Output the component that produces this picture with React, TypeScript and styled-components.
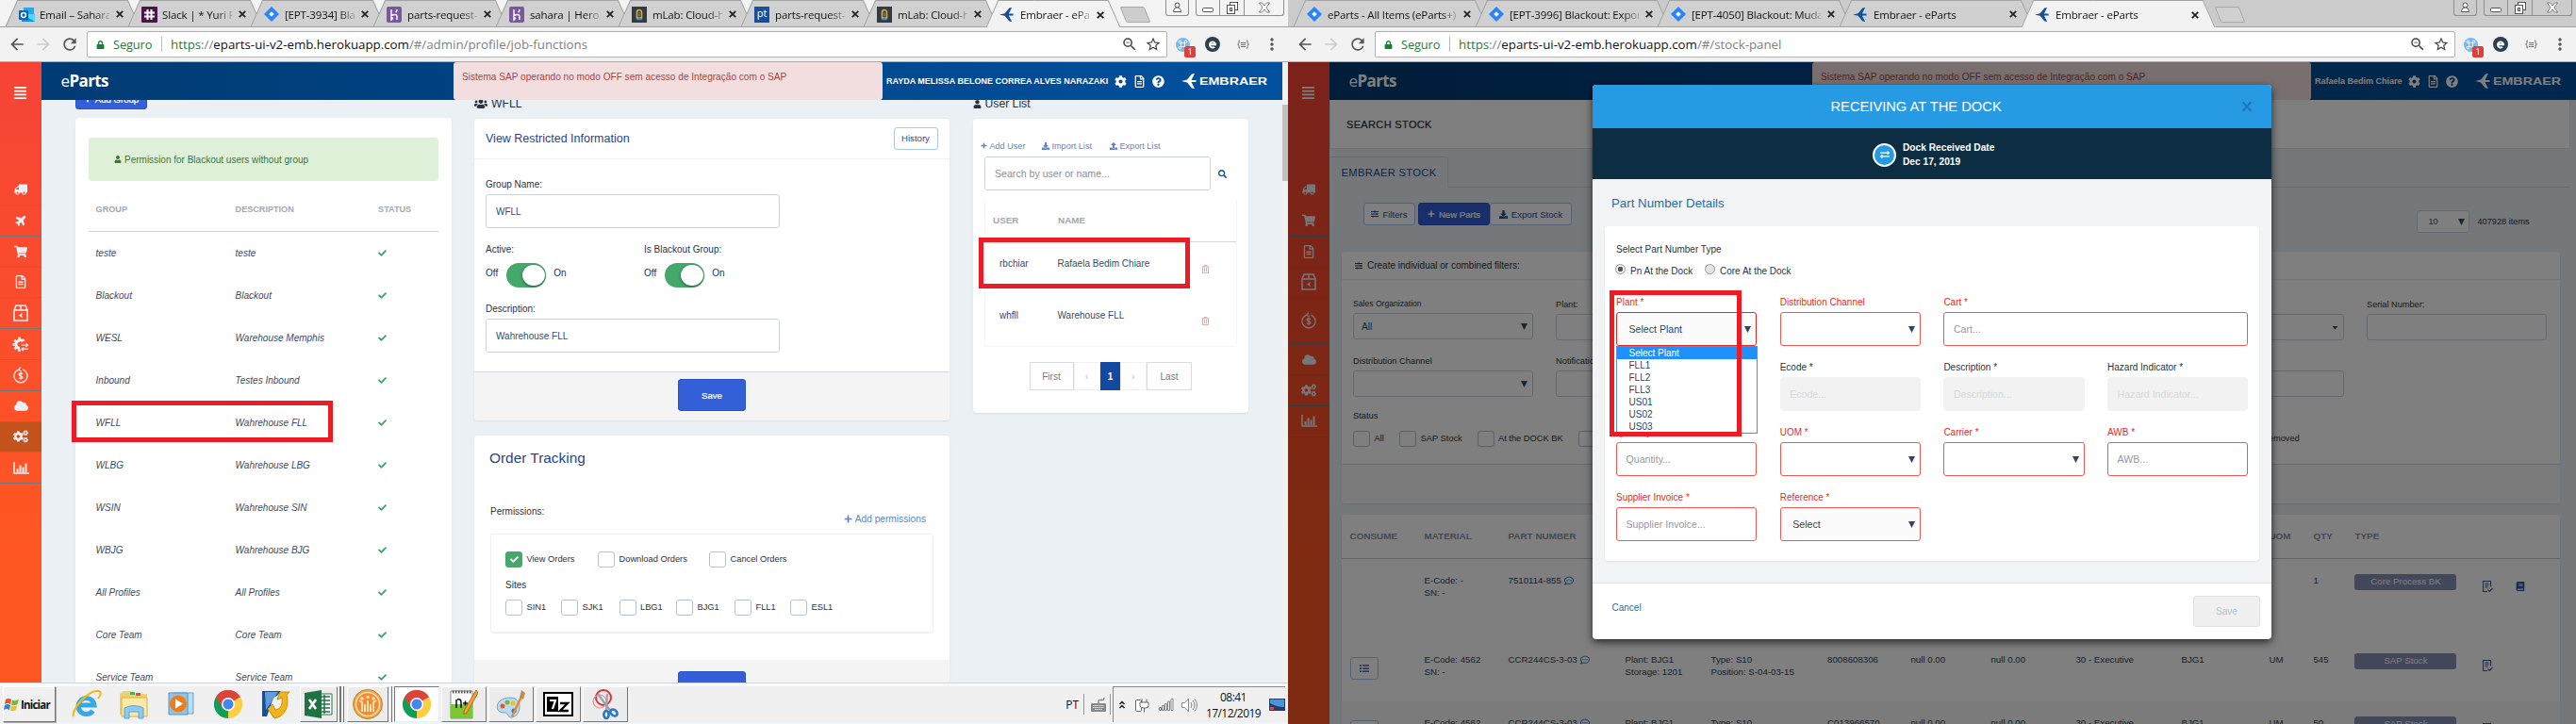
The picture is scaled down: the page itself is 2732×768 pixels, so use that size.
import React from 'react';
import styled, { createGlobalStyle, css } from 'styled-components';
import {
  FaTruck, FaPlane, FaShoppingCart, FaRegFileAlt, FaCloud, FaCogs, FaCog, FaUsers, FaUser, FaRegTrashAlt,
  FaSlidersH, FaPlus, FaDownload, FaUpload, FaSearch, FaQuestionCircle, FaCheck, FaExchangeAlt, FaListUl,
  FaRegCommentDots, FaBook, FaAlignJustify, FaLock,
} from 'react-icons/fa';
import { MdArrowBack, MdArrowForward, MdRefresh, MdStarBorder, MdMoreVert, MdZoomOut } from 'react-icons/md';

const Global = createGlobalStyle`
  * { box-sizing: border-box; }
  body { margin: 0; font-family: "Liberation Sans", Arial, sans-serif; font-size: 10px; color: #2a3342; }
  svg { display: block; flex: none; }
`;

const Desktop = styled.div`
  display: flex;
  width: 2732px;
  height: 768px;
  overflow: hidden;
`;
const Window = styled.section`
  display: flex;
  flex-direction: column;
  width: 1366px;
  height: 768px;
  position: relative;
  overflow: hidden;
  background: #fff;
`;

/* ---------- browser chrome ---------- */
const uiFont = css`font-family: "Open Sans", "Noto Sans", sans-serif;`;

const TabStrip = styled.div<{ $bg: string }>`
  display: flex;
  height: 29px;
  flex: none;
  padding-left: 12px;
  background: ${p => p.$bg};
  border-bottom: 1px solid #a3a3a3;
  ${uiFont}
`;
const TabBox = styled.div<{ $w: number; $active?: boolean }>`
  position: relative;
  display: flex;
  align-items: center;
  width: ${p => p.$w}px;
  height: ${p => (p.$active ? 29 : 28)}px;
  flex: none;
  padding: 2px 0 0 8px;
  z-index: ${p => (p.$active ? 2 : 1)};
  &::before, &::after {
    content: "";
    position: absolute;
    top: 0;
    bottom: 0;
    z-index: -1;
    background: ${p => (p.$active ? '#f2f2f2' : '#d0d0d0')};
    border-top: 1px solid #a3a3a3;
  }
  &::before { left: 0; width: 60%; transform: skewX(-24deg); border-left: 1.5px solid #a0a0a0; }
  &::after { right: 0; width: 60%; transform: skewX(24deg); border-right: 1.5px solid #a0a0a0; }
`;
const TabIcon = styled.span`width: 16px; height: 17px; display: flex; align-items: center;`;
const TabTitle = styled.span<{ $w: number }>`
  width: ${p => p.$w}px;
  margin-left: 6px;
  overflow: hidden;
  white-space: nowrap;
  font-size: 11.5px;
  letter-spacing: -0.15px;
  color: #111;
  mask-image: linear-gradient(90deg, #000 calc(100% - 16px), transparent calc(100% + 4px));
`;
const TabClose = styled.span`
  margin-left: 7px;
  svg { width: 8px; height: 8px; }
`;
const NewTab = styled.span<{ $bg: string }>`
  width: 26px;
  height: 17px;
  margin: 7px 0 0 9px;
  transform: skewX(22deg);
  background: ${p => p.$bg};
  border: 1px solid #a8a8a8;
  border-radius: 2px;
`;
const WinControls = styled.div`
  display: flex;
  gap: 7px;
  margin-left: auto;
  padding-right: 4px;
  height: 17px;
`;
const CtlGroup = styled.div`
  display: flex;
  border: 1px solid #8e8e8e;
  border-top: 0;
  border-radius: 0 0 3px 3px;
`;
const Ctl = styled.span<{ $w: number }>`
  width: ${p => p.$w}px;
  display: flex;
  align-items: center;
  justify-content: center;
  & + & { border-left: 1px solid #8e8e8e; }
`;
const Toolbar = styled.div`
  display: flex;
  align-items: center;
  height: 37px;
  flex: none;
  padding: 0 0 0 8px;
  background: #f2f2f2;
  border-bottom: 1px solid #aaa;
  color: #555;
  ${uiFont}
`;
const NavIcon = styled.span<{ $light?: boolean }>`
  width: 28px;
  color: ${p => (p.$light ? '#ccc' : '#555')};
  svg { width: 20px; height: 20px; }
`;
const AddressBar = styled.div`
  display: flex;
  align-items: center;
  width: 1146px;
  height: 28px;
  padding: 0 5px 0 9px;
  background: #fff;
  border: 1px solid #b0b0b0;
  border-radius: 2px;
  font-size: 13.3px;
`;
const Secure = styled.span`
  display: flex;
  align-items: center;
  width: 70px;
  margin-right: 9px;
  gap: 9px;
  color: #188038;
  border-right: 1px solid #bbb;
  font-size: 12.8px;
  letter-spacing: -0.1px;
  line-height: 16px;
`;
const Url = styled.span`
  flex: 1;
  color: #808080;
  i { font-style: normal; color: #188038; }
  b { font-weight: 400; color: #111; }
`;
const BarIcon = styled.span`margin-left: 7px; color: #444; svg { width: 18px; height: 18px; }`;
const Extension = styled.span<{ $ml: number }>`position: relative; margin-left: ${p => p.$ml}px;`;
const Badge = styled.span`
  position: absolute;
  left: 9px;
  top: 9px;
  width: 12px;
  height: 12px;
  border-radius: 2px;
  background: #db4040;
  color: #fff;
  font-size: 9px;
  line-height: 12px;
  text-align: center;
`;

const Bird = ({ c, s = 16 }: { c: string; s?: number }) => (
  <svg width={s} height={s} viewBox="0 0 16 16" fill={c}>
    <path d="M0 8 L6 6.6 L11 .5 L14 0 L10.500 7 H15.500 V9 H10.500 L14 16 L11 15.500 L6 9.400Z" />
  </svg>
);
const icons: Record<string, React.ReactNode> = {
  outlook: (
    <svg width="17" height="17" viewBox="0 0 17 17"><rect x="5" y="1" width="11" height="14" fill="#28a8ea" /><path d="M3 8h14v8H3z" fill="#50d9ff" /><path d="M3 8l14 8H3z" fill="#1490df" /><rect y="4" width="10" height="10" rx="1" fill="#0364b8" /><circle cx="5" cy="9" r="2.400" fill="none" stroke="#fff" strokeWidth="1.500" /></svg>
  ),
  slack: (
    <svg width="17" height="17" viewBox="0 0 17 17"><rect width="17" height="17" rx="1" fill="#4a154b" /><path d="M6.500 3v11M10.500 3v11M3 6.500h11M3 10.500h11" stroke="#fff" strokeWidth="2" /></svg>
  ),
  jira: (
    <svg width="16" height="16" viewBox="0 0 16 16"><path d="M8 0l8 8-8 8-8-8z" fill="#2684ff" /><path d="M8 5.200L10.800 8 8 10.800 5.200 8z" fill="#fff" /></svg>
  ),
  heroku: (
    <svg width="16" height="17" viewBox="0 0 16 17"><rect width="16" height="17" rx="2" fill="#79589f" /><path d="M5 3v6.500c3-1.500 6-1.500 6 .5v4M5 14v-3l1.500 1.500zM11 3c0 1.500-.6 2.500-1.300 3.200" fill="none" stroke="#fff" strokeWidth="1.400" /></svg>
  ),
  mlab: (
    <svg width="16" height="17" viewBox="0 0 16 17"><rect width="16" height="17" fill="#2f3b45" /><path d="M5.500 12V6a2.500 2.500 0 0 1 5 0v6z" fill="none" stroke="#f0a828" strokeWidth="1.600" /><path d="M5 13.500h6M8 6v6" stroke="#3f8ad0" strokeWidth="1.300" /></svg>
  ),
  bird: <Bird c="#1450a0" s={15} />,
};
const PtIcon = styled.span`
  width: 16px;
  height: 17px;
  background: #14509b;
  color: #fff;
  font-size: 11px;
  line-height: 14px;
  text-align: center;
`;

type TabInfo = { icon: string; title: string };
const Tab = ({ icon, title, w, active }: TabInfo & { w: number; active?: boolean }) => (
  <TabBox $w={w} $active={active}>
    <TabIcon>{icon === 'pt' ? <PtIcon>pt</PtIcon> : icons[icon]}</TabIcon>
    <TabTitle $w={w - 56}>{title}</TabTitle>
    <TabClose>
      <svg viewBox="0 0 8 8" stroke="#222" strokeWidth="1.800"><path d="M.8.8l6.400 6.400M7.200.8L.8 7.200" /></svg>
    </TabClose>
  </TabBox>
);

const Chrome = ({ tabs, w, bg, newBg, path }: { tabs: TabInfo[]; w: number; bg: string; newBg: string; path: string }) => (
  <>
    <TabStrip $bg={bg}>
      {tabs.map((t, i) => <Tab key={i} {...t} w={w} active={i === tabs.length - 1} />)}
      <NewTab $bg={newBg} />
      <WinControls>
        <CtlGroup><Ctl $w={23}><svg width="11" height="12" viewBox="0 0 11 12" fill="#fff" stroke="#555"><circle cx="5.500" cy="3.500" r="2.500" /><path d="M1.500 10.500c0-6 8-6 8 0z" /></svg></Ctl></CtlGroup>
        <CtlGroup>
          <Ctl $w={24}><svg width="13" height="12" fill="#fff" stroke="#555"><rect x=".5" y="6.500" width="11" height="4" rx="1" /></svg></Ctl>
          <Ctl $w={26}><svg width="14" height="13" fill="#fff" stroke="#555"><rect x="4.500" y=".5" width="8" height="8" /><rect x="1.500" y="3.500" width="8" height="9" /><rect x="4.500" y="6.500" width="2" height="3" /></svg></Ctl>
          <Ctl $w={42}><svg width="12" height="12" viewBox="0 0 12 12" fill="#fff" stroke="#666" strokeWidth=".8"><path d="M.5 1h3L6 4l2.500-3h3L8 6l3.500 5h-3L6 8l-2.500 3h-3L4 6z" /></svg></Ctl>
        </CtlGroup>
      </WinControls>
    </TabStrip>
    <Toolbar>
      <NavIcon><MdArrowBack /></NavIcon>
      <NavIcon $light><MdArrowForward /></NavIcon>
      <NavIcon><MdRefresh /></NavIcon>
      <AddressBar>
        <Secure><FaLock size={9} />Seguro</Secure>
        <Url><i>https</i>://<b>eparts-ui-v2-emb.herokuapp.com</b>{path}</Url>
        <BarIcon><MdZoomOut /></BarIcon>
        <BarIcon><MdStarBorder /></BarIcon>
      </AddressBar>
      <Extension $ml={9}>
        <svg width="15" height="15" viewBox="0 0 15 15"><circle cx="7.500" cy="7.500" r="7.500" fill="#7ab8ee" /><path d="M5.500 5.500h4v4h-4zM5.500 5.500h-1a1.200 1.200 0 1 1 1-1zM9.500 5.500h1a1.200 1.200 0 1 0-1-1zM5.500 9.500h-1a1.200 1.200 0 1 0 1 1zM9.500 9.500h1a1.200 1.200 0 1 1-1 1z" fill="none" stroke="#fff" /></svg>
        <Badge>1</Badge>
      </Extension>
      <Extension $ml={16}>
        <svg width="16" height="16" viewBox="0 0 16 16"><circle cx="8" cy="8" r="8" fill="#2c3f50" /><path d="M5 8.200h6a3 3 0 1 0-1 2.500" fill="none" stroke="#fff" strokeWidth="2" /></svg>
      </Extension>
      <Extension $ml={17}>
        <svg width="15" height="10" fill="none" stroke="#777"><path d="M4 1H3v3L1.500 5 3 6v3h1M11 1h1v3l1.500 1L12 6v3h-1M5 3.500h5M5 5.500h5M5 7.500h5" /></svg>
      </Extension>
      <Extension $ml={13}><MdMoreVert size={20} /></Extension>
    </Toolbar>
  </>
);

/* ---------- application shell ---------- */
const Body = styled.div<{ $h: number }>`
  display: flex;
  height: ${p => p.$h}px;
  flex: none;
  position: relative;
`;
const Sidebar = styled.nav`
  width: 44px;
  flex: none;
  background: linear-gradient(180deg, #f64336, #ff5722 80%);
  color: #eceff5;
`;
const MenuButton = styled.div`
  display: flex;
  align-items: center;
  height: 119.2px;
  padding: 0 0 54px 14px;
  color: #fff;
`;
const SideItem = styled.div<{ $h?: number; $on?: boolean }>`
  display: flex;
  align-items: center;
  justify-content: center;
  height: ${p => p.$h || 32.8}px;
  border-bottom: 1.5px solid #75787a;
  background: ${p => (p.$on ? '#c4521d' : 'none')};
`;
const Flip = styled.span<{ $t: string }>`transform: ${p => p.$t};`;

const sideIcons: Record<string, React.ReactNode> = {
  truck: <Flip $t="scaleX(-1)"><FaTruck size={14} /></Flip>,
  plane: <Flip $t="rotate(-45deg)"><FaPlane size={13} /></Flip>,
  cart: <FaShoppingCart size={14} />,
  file: <FaRegFileAlt size={14} />,
  box: <svg width="16" height="18" viewBox="0 0 16 18" fill="none" stroke="currentColor" strokeWidth="1.500"><path d="M1 6h14v11H1zM1 6l2-5h10l2 5M8 1v5" /><path d="M6 11.500l4-3-1 3 1 3z" fill="currentColor" stroke="none" /></svg>,
  gear: (
    <svg width="18" height="17" viewBox="0 0 18 17" fill="none" stroke="currentColor">
      <path d="M11.500 5A4.500 4.500 0 1 0 8 12.800" strokeWidth="3" />
      <path d="M2.200 3.800l1.500 1.400M7.500 .6v2.400M12.600 3.200l-1.400 1.400M.5 8.300h2.200M2.400 13.200l1.500-1.500M7.300 16v-2.500" strokeWidth="2.800" />
      <path d="M9.500 9h7M14.500 7.200L16.500 9l-2 1.800M17 13.200h-7M12 11.400l-2 1.800 2 1.800" strokeWidth="1.200" />
    </svg>
  ),
  dollar: <svg width="16" height="18" viewBox="0 0 16 18" fill="none" stroke="currentColor" strokeWidth="1.300"><path d="M10.500 3.200a7 7 0 1 1-5.500.2M8 .5L5.500 3.300 9 5" /><path d="M10 7.500C9 6.500 6 6.500 6 8.200s4 1.400 4 3-3 1.800-4 .6M8 5.800v8" /></svg>,
  cloud: <FaCloud size={15} />,
  cogs: <FaCogs size={16} />,
  chart: <svg width="17" height="13" viewBox="0 0 17 13" fill="none" stroke="currentColor"><path d="M1 0v12h16" strokeWidth="1.500" /><path d="M4.500 11V7M7.500 11V3.500M10.500 11V5.500M13.500 11V1.500" strokeWidth="2" /></svg>,
};

const Main = styled.main`
  display: flex;
  flex-direction: column;
  flex: 1;
  min-width: 0;
  background: #eaf0f4;
`;
const Header = styled.header`
  display: flex;
  height: 40px;
  flex: none;
  background: linear-gradient(90deg, #003b73, #00519f);
  color: #fff;
`;
const Brand = styled.div<{ $w: number }>`
  width: ${p => p.$w}px;
  padding-left: 20.5px;
  font: 17px/39px "Open Sans", sans-serif;
  letter-spacing: -0.6px;
  b { font-weight: 700; }
`;
const Banner = styled.div<{ $w: number }>`
  width: ${p => p.$w}px;
  padding: 9px 9px;
  background: #f2dede;
  color: #a94442;
  border-radius: 3px;
  line-height: 14px;
  font-size: 10.1px;
`;
const UserName = styled.div<{ $w: number }>`
  width: ${p => p.$w}px;
  margin-left: 4px;
  font-size: 9px;
  font-weight: 700;
  line-height: 40px;
  white-space: nowrap;
`;
const HeaderIcons = styled.div`
  display: flex;
  align-items: center;
  gap: 7px;
  margin-right: 18px;
`;
const Logo = styled.div`display: flex; align-items: center; gap: 2px;`;

const AppHeader = ({ brandW, bannerW, name, nameW }: { brandW: number; bannerW: number; name: string; nameW: number }) => (
  <Header>
    <Brand $w={brandW}>e<b>Parts</b></Brand>
    <Banner $w={bannerW}>Sistema SAP operando no modo OFF sem acesso de Integração com o SAP</Banner>
    <UserName $w={nameW}>{name}</UserName>
    <HeaderIcons><FaCog size={13} /><FaRegFileAlt size={13} /><FaQuestionCircle size={13} /></HeaderIcons>
    <Logo>
      <Bird c="#fff" />
      <svg width="74" height="12"><text x="1" y="10" fontSize="10.500" fontWeight="700" fill="#fff" textLength="72" lengthAdjust="spacingAndGlyphs">EMBRAER</text></svg>
    </Logo>
  </Header>
);

/* ---------- shared parts ---------- */
const Highlight = styled.div<{ $x: number; $y: number; $w: number; $h: number }>`
  position: absolute;
  left: ${p => p.$x}px;
  top: ${p => p.$y}px;
  width: ${p => p.$w}px;
  height: ${p => p.$h}px;
  border: 5px solid #ed1c24;
  z-index: 20;
`;
const Card = styled.div<{ $mt?: number }>`
  margin-top: ${p => p.$mt || 0}px;
  background: #fff;
  border-radius: 4px;
  box-shadow: 0 1px 2px rgba(0, 0, 0, 0.08);
  overflow: hidden;
`;
const Label = styled.div<{ $mt?: number; $c?: string; $s?: number }>`
  margin-top: ${p => p.$mt || 0}px;
  height: 14px;
  line-height: 14px;
  font-size: ${p => p.$s || 10}px;
  color: ${p => p.$c || '#2a3342'};
  white-space: nowrap;
`;
const Input = styled.div<{ $w?: number; $mt?: number; $h?: number; $ph?: boolean }>`
  width: ${p => (p.$w ? p.$w + 'px' : 'auto')};
  height: ${p => p.$h || 36}px;
  margin-top: ${p => p.$mt || 0}px;
  display: flex;
  align-items: center;
  justify-content: space-between;
  padding: 0 10px;
  border: 1px solid #ccd3dd;
  border-radius: 3px;
  background: #fff;
  color: ${p => (p.$ph ? '#8b8f94' : '#3a4a66')};
`;
const SelectInput = styled(Input)`padding: 0 5px 0 8px;`;
const Button = styled.div<{ $kind: 'primary' | 'outline'; $w: number; $h: number }>`
  width: ${p => p.$w}px;
  height: ${p => p.$h}px;
  flex: none;
  display: flex;
  align-items: center;
  justify-content: center;
  gap: 4px;
  border-radius: 3px;
  font-size: 9.6px;
  white-space: nowrap;
  ${p => p.$kind === 'primary'
    ? css`background: #335fd8; border: 1px solid #2a52c0; color: #fff; -webkit-text-stroke: 0.2px #fff;`
    : css`background: #fff; border: 1px solid #a9c5f2; color: #1f4a99;`}
`;
const AddGroupButton = styled(Button)`padding-top: 2px;`;
const NewPartsButton = styled(Button)`margin-left: 3px;`;
const Checkbox = styled.span<{ $on?: boolean }>`
  width: 18px;
  height: 17px;
  flex: none;
  display: flex;
  align-items: center;
  justify-content: center;
  border: 1px solid ${p => (p.$on ? '#44a86b' : '#b4c2d8')};
  border-radius: 3px;
  background: ${p => (p.$on ? '#44a86b' : '#fff')};
  color: #fff;
`;
const CheckItem = styled.span<{ $w: number }>`
  display: flex;
  align-items: center;
  gap: 4.5px;
  width: ${p => p.$w}px;
  font-size: 9.3px;
  white-space: nowrap;
`;
const CheckRow = styled.div<{ $mt?: number }>`display: flex; height: 17px; margin-top: ${p => p.$mt || 0}px;`;
const CheckGroup = ({ items, mt }: { items: [string, number, boolean?][]; mt?: number }) => (
  <CheckRow $mt={mt}>
    {items.map(([t, w, on]) => (
      <CheckItem key={t} $w={w}><Checkbox $on={on}>{on && <FaCheck size={9} />}</Checkbox>{t}</CheckItem>
    ))}
  </CheckRow>
);
const Caret = ({ small }: { small?: boolean }) => (
  <svg width="7" height="7" viewBox="0 0 7 7" fill="currentColor"><path d={small ? 'M.5 2h6L3.500 5.500z' : 'M0 0h7L3.500 7z'} /></svg>
);

/* ---------- job functions page ---------- */
const Columns = styled.div`
  display: flex;
  flex: 1;
  min-height: 0;
  overflow: hidden;
  padding-left: 36px;
`;
const Column = styled.div<{ $w: number; $ml?: number; $mt: number }>`
  width: ${p => p.$w}px;
  margin: ${p => p.$mt}px 0 0 ${p => p.$ml || 0}px;
  flex: none;
`;
const ColumnTitle = styled.div`
  display: flex;
  align-items: center;
  gap: 4px;
  height: 20px;
  font-size: 12.2px;
  color: #2a3342;
`;
const Alert = styled.div`
  display: flex;
  align-items: center;
  gap: 3px;
  height: 46px;
  margin: 21px 14px 7px;
  padding-left: 27px;
  background: #dff0d8;
  color: #3c763d;
  border-radius: 3px;
`;
const GroupHead = styled.div`
  display: grid;
  grid-template-columns: 148px 151.5px 1fr;
  align-items: center;
  height: 47px;
  margin: 0 14px;
  padding-left: 7.600px;
  border-bottom: 1px solid #d3d7dc;
  font-size: 9.1px;
  font-weight: 700;
  color: #a2a8b2;
`;
const GroupRow = styled(GroupHead)`
  height: 45px;
  border: 0;
  font-size: 10px;
  font-weight: 400;
  font-style: italic;
  color: #3a4a66;
  svg { color: #38a565; }
`;
const CardHead = styled.div`
  display: flex;
  align-items: center;
  justify-content: space-between;
  height: 43px;
  padding: 0 12.500px 0 12px;
  border-bottom: 1px solid #f0f0f2;
  font-size: 12.5px;
  color: #274785;
`;
const CardBody = styled.div`padding: 0 12px 20px 12px;`;
const CardFoot = styled.div<{ $pt: number; $line?: boolean }>`
  height: 52px;
  padding-top: ${p => p.$pt}px;
  display: flex;
  justify-content: center;
  background: #f4f4f4;
  border-top: ${p => (p.$line ? '1px solid #d3d8e0' : '0')};
`;
const SwitchRow = styled.div`display: flex; margin-top: 7px; height: 26px;`;
const SwitchLabel = styled.div`
  display: flex;
  width: 168px;
  gap: 8.500px;
  line-height: 22px;
`;
const Toggle = styled.span`
  width: 42px;
  height: 26px;
  border-radius: 13px;
  background: #44a86b;
  padding: 2px 1px 2px 17px;
  &::after {
    content: "";
    display: block;
    width: 24px;
    height: 22px;
    border-radius: 50%;
    background: #fff;
    box-shadow: 0 1px 3px rgba(0, 0, 0, 0.5);
  }
`;
const TwoLabels = styled.div`display: flex; ${Label} { width: 168px; }`;
const OrderTitle = styled.div`
  margin: 13.500px 0 0 16px;
  height: 20px;
  line-height: 20px;
  font-size: 15.4px;
  color: #274785;
`;
const PermHead = styled.div`
  display: flex;
  justify-content: space-between;
  margin: 37.500px 25px 0 17px;
  height: 33px;
  padding-top: 3px;
`;
const LinkText = styled.span<{ $w?: number }>`
  display: flex;
  align-items: center;
  gap: 3px;
  width: ${p => (p.$w ? p.$w + 'px' : 'auto')};
  height: 14px;
  font-size: ${p => (p.$w ? 9.1 : 10.2)}px;
  color: #5f83c3;
  white-space: nowrap;
`;
const AddPermissions = styled(LinkText)`margin-top: 7px;`;
const PermBox = styled.div`
  height: 106px;
  margin: 0 17px 28px 16.500px;
  padding: 17.500px 15.500px;
  border: 1px solid #f0f0f0;
  border-bottom-width: 2px;
  border-radius: 4px;
`;
const LinkRow = styled.div`display: flex; margin: 22px 0 4.500px 8px;`;
const SearchRow = styled.div`
  display: flex;
  align-items: center;
  gap: 8px;
  padding-left: 12.500px;
  color: #15508f;
  font-size: 10.6px;
`;
const UserTable = styled.div`
  margin: 8px 12px 16px 12.500px;
  border: 1px solid #f6f6f6;
  border-top: 0;
  border-radius: 4px;
`;
const UserHead = styled.div`
  display: flex;
  align-items: center;
  height: 47px;
  padding-left: 8px;
  border-bottom: 1px solid #d3d7dc;
  font-size: 9.900px;
  font-weight: 700;
  color: #a2a8b2;
  span { width: 69px; }
`;
const UserRow = styled.div`
  display: flex;
  height: 55px;
  padding: 16px 0 0 15px;
  line-height: 14px;
  color: #3a4a66;
  span:nth-child(1) { width: 61.500px; }
  span:nth-child(2) { width: 152px; }
  svg { margin-top: 8px; color: #ef8f8f; }
`;
const Pager = styled.div`display: flex; height: 30px; margin: 0 0 24px 60px;`;
const PageCell = styled.span<{ $w: number; $on?: boolean; $dim?: boolean }>`
  width: ${p => p.$w}px;
  display: flex;
  align-items: center;
  justify-content: center;
  border: 1px solid ${p => (p.$on ? '#114a9f' : p.$dim ? '#f0f0f0' : '#d8dadd')};
  background: ${p => (p.$on ? '#114a9f' : '#fff')};
  color: ${p => (p.$on ? '#fff' : p.$dim ? '#bbb' : '#777')};
  font-weight: ${p => (p.$on ? 700 : 400)};
`;
const ScrollTrack = styled.div`width: 6px; flex: none; background: #f1f1f1; padding-top: 45px;`;
const ScrollThumb = styled.div`height: 81px; background: #c1c1c1;`;

const groups: [string, string][] = [
  ['teste', 'teste'], ['Blackout', 'Blackout'], ['WESL', 'Warehouse Memphis'], ['Inbound', 'Testes Inbound'],
  ['WFLL', 'Wahrehouse FLL'], ['WLBG', 'Wahrehouse LBG'], ['WSIN', 'Wahrehouse SIN'], ['WBJG', 'Wahrehouse BJG'],
  ['All Profiles', 'All Profiles'], ['Core Team', 'Core Team'], ['Service Team', 'Service Team'],
];

const Switch = () => <SwitchLabel>Off<Toggle />On</SwitchLabel>;

const JobFunctions = () => (
  <Body $h={658}>
    <Sidebar>
      <MenuButton><FaAlignJustify size={15} /></MenuButton>
      {['truck', 'plane', 'cart', 'file', 'box', 'gear', 'dollar', 'cloud', 'cogs', 'chart'].map(k => (
        <SideItem key={k} $on={k === 'cogs'}>{sideIcons[k]}</SideItem>
      ))}
    </Sidebar>
    <Main>
      <AppHeader brandW={437} bannerW={455} name="RAYDA MELISSA BELONE CORREA ALVES NARAZAKI" nameW={242} />
      <Columns>
        <Column $w={399} $mt={-14}>
          <AddGroupButton $kind="primary" $w={76} $h={24}><FaPlus size={8} />Add Group</AddGroupButton>
          <Card $mt={9}>
            <Alert><FaUser size={8} />Permission for Blackout users without group</Alert>
            <GroupHead><span>GROUP</span><span>DESCRIPTION</span><span>STATUS</span></GroupHead>
            {groups.map(([g, d]) => (
              <GroupRow key={g}><span>{g}</span><span>{d}</span><FaCheck size={9} /></GroupRow>
            ))}
          </Card>
        </Column>
        <Column $w={504} $ml={24} $mt={-6}>
          <ColumnTitle><FaUsers size={14} />WFLL</ColumnTitle>
          <Card $mt={5.5}>
            <CardHead>View Restricted Information<Button $kind="outline" $w={47} $h={24}>History</Button></CardHead>
            <CardBody>
              <Label $mt={20.500}>Group Name:</Label>
              <Input $w={312} $mt={3}>WFLL</Input>
              <TwoLabels><Label $mt={16}>Active:</Label><Label $mt={16}>Is Blackout Group:</Label></TwoLabels>
              <SwitchRow><Switch /><Switch /></SwitchRow>
              <Label $mt={15.500}>Description:</Label>
              <Input $w={312} $mt={3.500}>Wahrehouse FLL</Input>
            </CardBody>
            <CardFoot $pt={7} $line><Button $kind="primary" $w={72} $h={34}>Save</Button></CardFoot>
          </Card>
          <Card $mt={16}>
            <OrderTitle>Order Tracking</OrderTitle>
            <PermHead>
              <Label>Permissions:</Label>
              <AddPermissions><FaPlus size={9} />Add permissions</AddPermissions>
            </PermHead>
            <PermBox>
              <CheckGroup items={[['View Orders', 98, true], ['Download Orders', 118], ['Cancel Orders', 90]]} />
              <Label $mt={12}>Sites</Label>
              <CheckGroup mt={8} items={[['SIN1', 59], ['SJK1', 61.5], ['LBG1', 60.5], ['BJG1', 62], ['FLL1', 59], ['ESL1', 60]]} />
            </PermBox>
            <CardFoot $pt={12}><Button $kind="primary" $w={72} $h={34} /></CardFoot>
          </Card>
        </Column>
        <Column $w={292} $ml={24.5} $mt={-6}>
          <ColumnTitle><FaUser size={9} />User List</ColumnTitle>
          <Card $mt={5.5}>
            <LinkRow>
              <LinkText $w={65}><FaPlus size={7} />Add User</LinkText>
              <LinkText $w={72}><FaDownload size={8} />Import List</LinkText>
              <LinkText $w={70}><FaUpload size={8} />Export List</LinkText>
            </LinkRow>
            <SearchRow><Input $w={240} $ph>Search by user or name...</Input><FaSearch size={9} /></SearchRow>
            <UserTable>
              <UserHead><span>USER</span><span>NAME</span></UserHead>
              <UserRow><span>rbchiar</span><span>Rafaela Bedim Chiare</span><FaRegTrashAlt size={9} /></UserRow>
              <UserRow><span>whfll</span><span>Warehouse FLL</span><FaRegTrashAlt size={9} /></UserRow>
            </UserTable>
            <Pager>
              <PageCell $w={47}>First</PageCell><PageCell $w={28.5} $dim>‹</PageCell>
              <PageCell $w={21} $on>1</PageCell><PageCell $w={28} $dim>›</PageCell><PageCell $w={48}>Last</PageCell>
            </Pager>
          </Card>
        </Column>
      </Columns>
    </Main>
    <ScrollTrack><ScrollThumb /></ScrollTrack>
  </Body>
);

/* ---------- taskbar ---------- */
const Taskbar = styled.footer`
  display: flex;
  align-items: flex-start;
  height: 44px;
  padding: 3px 3px 0 3px;
  border-top: 1px solid #d0d4d8;
  background: linear-gradient(180deg, #f7f9fb 0 3px, #f0f0f0 3px 41px, #eef4fa 41px);
  font: 12px/17px "Open Sans", sans-serif;
  color: #111;
`;
const StartButton = styled.div`
  display: flex;
  align-items: center;
  gap: 1px;
  width: 56px;
  height: 38px;
  margin-right: 14px;
  border: 1px solid;
  border-color: #fff #777 #777 #fff;
  box-shadow: 1px 1px 0 #aaa;
  font-weight: 700;
  font-size: 11.5px;
  letter-spacing: -0.8px;
`;
const QuickItem = styled.span<{ $w?: number }>`
  width: ${p => p.$w || 50}px;
  height: 38px;
  display: flex;
  align-items: center;
  justify-content: center;
`;
const QuickGap = styled.span`width: 5px;`;
const TaskButton = styled.span<{ $on?: boolean; $stack?: number }>`
  width: ${p => 48 - (p.$stack || 0) * 4}px;
  margin-right: ${p => 2 + (p.$stack || 0) * 4}px;
  height: 38px;
  display: flex;
  align-items: center;
  justify-content: center;
  background: ${p => (p.$on ? '#fff' : '#ececec')};
  border: 1px solid;
  border-color: ${p => (p.$on ? '#777 #eee #eee #777' : '#fff #777 #777 #fff')};
  box-shadow: ${p => (p.$stack === 2 ? '2px 0 0 #f0f0f0, 4px 0 0 #777, 6px 0 0 #f0f0f0, 7px 0 0 #777' : p.$stack === 1 ? '3px 0 0 #f0f0f0, 4px 0 0 #777' : 'none')};
`;
const Tray = styled.div`
  display: flex;
  align-items: center;
  height: 38px;
  margin-left: auto;
  svg { color: #777; }
`;
const TraySep = styled.span<{ $m: string }>`width: 1px; height: 22px; margin: ${p => p.$m}; background: #999;`;
const TrayBox = styled.div`
  display: flex;
  align-items: center;
  width: 183px;
  height: 38px;
  margin-left: 2px;
  padding-left: 6px;
  border-top: 1px solid #888;
  border-left: 1px solid #888;
`;
const TrayIcon = styled.span<{ $ml: number }>`margin-left: ${p => p.$ml}px;`;
const Clock = styled.div`width: 79px; text-align: center; letter-spacing: -0.55px;`;

const ChromeLogo = () => (
  <svg width="30" height="30" viewBox="0 0 30 30">
    <path d="M15 15L2 7.500A15 15 0 0 1 28 7.500z" fill="#db4437" /><path d="M15 15L2 7.500A15 15 0 0 0 15 30l6.500-11z" fill="#0f9d58" />
    <path d="M15 15h0L28 7.500A15 15 0 0 1 15 30z" fill="#ffcd40" /><path d="M2 7.500A15 15 0 0 1 28 8H15a7 7 0 0 0-6.500 10z" fill="#db4437" />
    <circle cx="15" cy="15" r="7" fill="#fff" /><circle cx="15" cy="15" r="5.500" fill="#4285f4" />
  </svg>
);

const TaskbarView = () => (
  <Taskbar>
    <StartButton>
      <svg width="17" height="16" viewBox="0 0 17 16"><path d="M2 3q3-2 6 0l-1 5q-3-2-6 0z" fill="#e8542c" /><path d="M9 3.500q3 1.500 7-.5l-1.500 5q-3 2-6.500.5z" fill="#7db72f" /><path d="M1 9q3-2 6 0l-1 5q-3-2-6 0z" fill="#2f86d6" /><path d="M8 9.500q3 1.500 6 0l-1 4.500q-3 2-6 .5z" fill="#f6bd1b" /></svg>
      Iniciar
    </StartButton>
    <QuickItem $w={38}>
      <svg width="32" height="32" viewBox="0 0 32 32" fill="none"><path d="M8 17h16a8.500 8.500 0 1 0-1.500 6" stroke="#35a8e8" strokeWidth="5" /><path d="M2 29C-1 22 18 0 29 2c3 1 1 6-1 8" stroke="#f3b81c" strokeWidth="2.200" /></svg>
    </QuickItem>
    <QuickItem $w={62}>
      <svg width="32" height="31" viewBox="0 0 32 31"><path d="M1 4l4-3h8l2 3h15v22H1z" fill="#f0d16c" /><path d="M12 2h5v3h-5z" fill="#4caf50" /><path d="M18 3h5v3h-5z" fill="#d9534f" /><path d="M3 8h27v20H3z" fill="#fbe9a5" stroke="#d6b24a" /><path d="M6 30V19q10-5 20 0v11h-5v-7H11v7z" fill="#8ec9ee" stroke="#5ba3d4" /></svg>
    </QuickItem>
    <QuickItem $w={38}>
      <svg width="28" height="28" viewBox="0 0 28 28"><path d="M6 2h21v22H6z" fill="#b8dcf2" stroke="#6fa6c9" /><path d="M1 2h20v23H1z" fill="#8fc4e8" stroke="#5b95c0" /><circle cx="11" cy="13.500" r="9" fill="#f07d1a" /><path d="M8 8.500v10l8-5z" fill="#fff" /></svg>
    </QuickItem>
    <QuickItem $w={62}><ChromeLogo /></QuickItem>
    <QuickItem $w={40}>
      <svg width="32" height="32" viewBox="0 0 32 32"><path d="M1 2h20l-4 5-4 2-7 20H1z" fill="#1d4f8f" /><path d="M4 3h14L5 22z" fill="#5f9edb" /><path d="M20 3h10l-3 3c3 11-1 23-13 25l-7-10 5-5 3 6c6-1 8-6 7-13l-5 2z" fill="#f1b51c" stroke="#c98d0c" /></svg>
    </QuickItem>
    <QuickGap />
    <TaskButton $stack={2}>
      <svg width="30" height="30" viewBox="0 0 30 30"><path d="M14 4h15v22H14z" fill="#fff" stroke="#1f7244" /><path d="M16 7h11M16 11h11M16 15h11M16 19h11M16 23h11M21 5v20" stroke="#1f7244" strokeWidth="1.500" /><path d="M0 3l18-3v30L0 27z" fill="#1f7244" /><path d="M5 10l7 10M12 10L5 20" stroke="#fff" strokeWidth="2.600" /></svg>
    </TaskButton>
    <TaskButton $stack={1}>
      <svg width="32" height="32" viewBox="0 0 32 32"><circle cx="16" cy="16" r="15.500" fill="#e9a548" stroke="#d17f1f" /><circle cx="16" cy="16" r="12.500" fill="#f58a34" stroke="#fbe2b2" strokeWidth="1.500" /><path d="M10 24V14l-3-2M22 24V14l3-2M16 24V12M13 24v-8M19 24v-8" stroke="#fbe2b2" strokeWidth="2" fill="none" /><circle cx="10" cy="10" r="1.800" fill="#fbe2b2" /><circle cx="16" cy="8.500" r="1.800" fill="#fbe2b2" /><circle cx="22" cy="10" r="1.800" fill="#fbe2b2" /></svg>
    </TaskButton>
    <TaskButton $on><ChromeLogo /></TaskButton>
    <TaskButton>
      <svg width="30" height="32" viewBox="0 0 30 32"><path d="M1 2h23v29H1z" fill="#fff" stroke="#888" /><path d="M1 16h23v15H1z" fill="#7bc72f" /><path d="M3 3h20" stroke="#555" strokeWidth="3" strokeDasharray="1.500 1.500" /><path d="M7 11v9M8 11c3-1 4 1 4 3v6M14 15h5M16.500 12.500v5M20 15h4" stroke="#111" strokeWidth="1.500" fill="none" /><path d="M28 1l2 3-12 21-3 2v-4z" fill="#f0a53a" stroke="#b0651a" /></svg>
    </TaskButton>
    <TaskButton>
      <svg width="32" height="32" viewBox="0 0 32 32"><path d="M2 22C-2 12 12 7 20 10c8 4 6 18-3 20-5 1-3-5-8-5-3 0-6-1-7-3z" fill="#b9dcf2" stroke="#6ba0c5" /><circle cx="7" cy="18" r="2.500" fill="#e8542c" /><circle cx="12" cy="14" r="2.500" fill="#7db72f" /><circle cx="18" cy="15" r="2.500" fill="#f6bd1b" /><circle cx="19" cy="23" r="2.500" fill="#3a6fd0" /><path d="M27 8L17 29" stroke="#e58a2b" strokeWidth="2.500" /><path d="M25 9l2-8 4 3-2 7z" fill="#c08a52" /></svg>
    </TaskButton>
    <TaskButton>
      <svg width="32" height="26" viewBox="0 0 32 26"><rect width="32" height="26" fill="#000" /><rect x="2" y="2" width="28" height="22" fill="#fff" /><rect x="4" y="5" width="12" height="16" fill="#000" /><path d="M7 9h6l-3 9" fill="none" stroke="#fff" strokeWidth="2.200" /><path d="M18 12h8l-8 8h9" fill="none" stroke="#000" strokeWidth="2.400" /></svg>
    </TaskButton>
    <TaskButton>
      <svg width="32" height="32" viewBox="0 0 32 32" fill="none"><circle cx="14" cy="9" r="8" stroke="#d9323a" strokeWidth="2" /><circle cx="10" cy="13" r="7" stroke="#e98f94" strokeWidth="1.200" /><path d="M8 5l14 19M18 5l-1 19" stroke="#9aa4ae" strokeWidth="2.200" /><ellipse cx="25" cy="25" rx="4" ry="3" stroke="#2b78bf" strokeWidth="2.600" transform="rotate(40 25 25)" /><ellipse cx="17" cy="27" rx="2.600" ry="4" stroke="#2b78bf" strokeWidth="2.600" /></svg>
    </TaskButton>
    <Tray>
      PT
      <TraySep $m="0 7px 0 5px" />
      <svg width="16" height="15" viewBox="0 0 16 15"><rect y="6" width="16" height="9" rx="1" fill="#888" /><path d="M2 8.500h12M2 10.500h12M4 12.500h8" stroke="#eee" strokeDasharray="1.500 .8" /><path d="M8 6V4q0-2 3-1.500T14 0" stroke="#888" fill="none" strokeWidth="1.500" /></svg>
      <TraySep $m="0 0 0 4px" />
      <TrayBox>
        <svg width="6" height="9" fill="none" stroke="#111" strokeWidth="1.300"><path d="M.5 4L3 1.500 5.500 4M.5 8L3 5.500 5.500 8" /></svg>
        <TrayIcon $ml={11}><svg width="16" height="16" viewBox="0 0 16 16" fill="#fff" stroke="#666"><rect x=".5" y="2.500" width="6" height="12" rx="1" /><path d="M5 5h9v4q0 2-3 2H9q-4 0-4-2zM7 5V1.500M12 5V1.500M9.500 11v4.500" /></svg></TrayIcon>
        <TrayIcon $ml={9}><svg width="16" height="13" viewBox="0 0 16 13" fill="#fff" stroke="#888"><path d="M.5 9.500h2v3h-2zM3.500 7.500h2v5h-2zM6.500 5.500h2v7h-2zM9.500 3h2v9.500h-2zM13 .5h2v12h-2z" /></svg></TrayIcon>
        <TrayIcon $ml={8}><svg width="17" height="16" viewBox="0 0 17 16" fill="none" stroke="#888"><path d="M.5 5.500h3l4-4.500v14l-4-4.500h-3z" fill="#fff" /><path d="M10 5q2 3 0 6M12 3q4 5 0 10M14 1.500q5 6.500 0 13" /></svg></TrayIcon>
        <Clock>08:41<br />17/12/2019</Clock>
        <svg width="17" height="13" viewBox="0 0 17 13"><rect width="17" height="13" fill="#1f3f74" /><path d="M1 1h15v8q-8 0-15-4z" fill="#4a94d8" /><rect x="1" y="9" width="4" height="3" fill="#d8542c" /></svg>
      </TrayBox>
    </Tray>
  </Taskbar>
);

/* ---------- stock panel page ---------- */
const PageTitle = styled.div`
  width: 1316px;
  height: 52px;
  padding-left: 17px;
  background: #fff;
  border: 1px solid #dde6ee;
  border-top: 0;
  font-size: 11px;
  line-height: 52px;
  letter-spacing: 0.35px;
  color: #222b38;
  -webkit-text-stroke: 0.2px #222b38;
`;
const StockTabs = styled.div`
  display: flex;
  height: 33px;
  margin-top: 8px;
  font-size: 11.2px;
  letter-spacing: 0.33px;
  line-height: 32px;
  color: #1f4a99;
`;
const StockTab = styled.div`
  width: 126px;
  padding-left: 12.500px;
  border: 1px solid #d4dce6;
  border-bottom: 0;
  border-left: 0;
  border-radius: 3px 3px 0 0;
`;
const StockTabRest = styled.div`width: 1190px; border-bottom: 1px solid #d4dce6;`;
const StockActions = styled.div`
  display: flex;
  height: 32px;
  margin: 16px 0 20px 36px;
`;
const PageSize = styled.div`
  display: flex;
  align-items: center;
  gap: 9px;
  height: 24px;
  margin: 8px 0 0 895.500px;
  font-size: 9.2px;
`;
const PageSizeSelect = styled(Input)`padding: 0 4px 0 12px;`;
const FilterPanel = styled(Card)`width: 1292px; margin-left: 12.500px; flex: none;`;
const FilterHead = styled.div`
  display: flex;
  align-items: center;
  gap: 5px;
  height: 30px;
  padding-left: 14.500px;
  border-bottom: 1px solid #e9ecf1;
`;
const FilterGrid = styled.div`
  display: grid;
  grid-template-columns: repeat(6, 191px);
  column-gap: 24px;
  row-gap: 15px;
  padding: 19px 0 0 12.500px;
`;
const FilterField = styled.div<{ $up?: boolean }>`margin-top: ${p => (p.$up ? -1 : 0)}px;`;
const FilterStatus = styled.div`padding: 0 0 18px 12.500px;`;
const FilterFoot = styled.div`height: 42px; border-top: 1px solid #d3d8e0; background: #f6f6f6;`;

const StockHead = styled.div`
  display: grid;
  grid-template-columns: 79px 89px 124px 91px 123.600px 88.400px 85px 90px 112px 93px 47px 44px 124px 1fr;
  height: 47px;
  padding-left: 9px;
  align-items: center;
  border-bottom: 1px solid #c5c9ce;
  font-weight: 700;
  color: #8d929a;
  font-size: 9.900px;
`;
const StockUom = styled.span`grid-column: 11;`;
const StockRow = styled(StockHead)<{ $h: number; $alt?: boolean }>`
  height: ${p => p.$h}px;
  align-items: flex-start;
  padding-top: 16.500px;
  border: 0;
  background: ${p => (p.$alt ? '#f7f7f7' : '#fff')};
  font-weight: 400;
  font-size: 9.700px;
  line-height: 13px;
  color: #2f3e56;
  white-space: nowrap;
`;
const WithIcon = styled.span`display: flex; align-items: center; gap: 3px; svg { color: #2a7fd0; }`;
const TypeBadge = styled.span`
  width: 108px;
  height: 17px;
  border-radius: 3px;
  background: #8490b4;
  color: #fff;
  text-align: center;
  line-height: 16px;
`;
const RowIcons = styled.span`display: flex; gap: 3px; color: #2c5cae;`;
const RowIcon = styled.span<{ $w: number }>`
  width: ${p => p.$w}px;
  height: 26px;
  display: flex;
  align-items: center;
  justify-content: center;
`;
const ListSlot = styled.span`padding-top: 4px; svg { width: 10px; height: 10px; }`;

type Stock = {
  h: number; top?: boolean; alt?: boolean; ecode: string; pn: string; plant?: string; type?: string;
  num?: string; site?: string; qty: string; kind: string; uom?: string; book?: boolean;
};
const StockLine = ({ h, top, alt, ecode, pn, plant, type, num, site, qty, kind, uom, book }: Stock) => (
  <StockRow $h={h} $alt={alt}>
    <ListSlot>{!top && <Button $kind="outline" $w={30} $h={24}><FaListUl /></Button>}</ListSlot>
    <span>E-Code: {ecode}<br />SN: -</span>
    <WithIcon>{pn}<FaRegCommentDots size={10} /></WithIcon>
    <span>{plant && <>Plant: {plant}<br />Storage: 1201</>}</span>
    <span>{type && <>Type: {type}<br />Position: S-04-03-15</>}</span>
    <span>{num}</span><span>{num && 'null 0.00'}</span><span>{num && 'null 0.00'}</span><span>{num && '30 - Executive'}</span>
    <span>{site}</span><span>{uom}</span><span>{qty}</span>
    <TypeBadge>{kind}</TypeBadge>
    <RowIcons>
      <RowIcon $w={35}>
        <svg width="11" height="12" viewBox="0 0 11 12" fill="none" stroke="currentColor" strokeWidth="1.100"><path d="M5 11.500H.5V.5h8v6M2.500 3h4M2.500 5h4M2.500 7h3M5.500 9.500l1.800 1.800L10.500 8" /></svg>
      </RowIcon>
      {book && <RowIcon $w={28}><FaBook size={10} /></RowIcon>}
    </RowIcons>
  </StockRow>
);

const Overlay = styled.div`
  position: absolute;
  inset: 0;
  background: rgba(0, 0, 0, 0.5);
`;

/* ---------- receiving dialog ---------- */
const Modal = styled.div`
  position: absolute;
  left: 323px;
  top: 90px;
  width: 720px;
  height: 588px;
  display: flex;
  flex-direction: column;
  background: #fff;
  border-radius: 4px;
  overflow: hidden;
  box-shadow: 0 3px 9px rgba(0, 0, 0, 0.7);
`;
const ModalHead = styled.div`
  display: flex;
  align-items: center;
  justify-content: space-between;
  height: 46px;
  padding: 0 20px 0 252.500px;
  background: #279ae4;
  color: #fff;
  font-size: 14.7px;
  span { line-height: 44px; }
`;
const ModalInfo = styled.div`
  display: flex;
  align-items: center;
  gap: 7px;
  height: 54px;
  padding: 2px 0 0 297px;
  background: #0d2e42;
  color: #fff;
  font-weight: 700;
  font-size: 10.2px;
  line-height: 15px;
`;
const Round = styled.span`
  display: flex;
  align-items: center;
  justify-content: center;
  width: 25px;
  height: 25px;
  border: 2px solid #fff;
  border-radius: 50%;
  background: #279ae4;
`;
const ModalBody = styled.div`height: 429px; padding: 0 13px; background: #f1f3f5; border-bottom: 1px solid #dfe1e3;`;
const ModalTitle = styled.div`height: 50px; padding-left: 7px; font-size: 13.3px; line-height: 51px; color: #1d6fa5;`;
const ModalCard = styled(Card)`height: 355px; padding: 18px 12px 0; overflow: visible;`;
const Radios = styled.div`display: flex; align-items: center; height: 14px; margin-top: 9px;`;
const RadioItem = styled.span<{ $w: number }>`display: flex; gap: 5px; width: ${p => p.$w}px; line-height: 14px; white-space: nowrap;`;
const Radio = styled.span<{ $on?: boolean }>`
  width: 11px;
  height: 11px;
  margin: -1.500px 0 0 -1px;
  border: 1px solid #999;
  border-radius: 50%;
  background: ${p => (p.$on ? 'radial-gradient(#555 0 2.5px, #eee 3px)' : '#e4e4e4')};
`;
const FormGrid = styled.div`
  display: grid;
  grid-template-columns: repeat(4, 149.300px);
  column-gap: 24.400px;
  row-gap: 19px;
  margin-top: 18.500px;
`;
const FieldBox = styled.div<{ $span?: boolean }>`
  position: relative;
  height: 50px;
  grid-column: span ${p => (p.$span ? 2 : 1)};
`;
const Control = styled.div<{ $state: 'invalid' | 'disabled' | 'open'; $select?: boolean; $filled?: boolean }>`
  display: flex;
  align-items: center;
  justify-content: space-between;
  height: 36px;
  margin-top: 3.500px;
  padding: 0 5px 0 ${p => (p.$select ? 12.5 : 9.5)}px;
  border: 1px solid ${p => (p.$state === 'disabled' ? '#f2f2f2' : p.$state === 'open' ? '#e8281e' : '#ee5a52')};
  border-radius: 3px;
  background: ${p => (p.$state === 'disabled' ? '#f2f2f2' : p.$filled ? '#fbfbfb' : '#fff')};
  color: ${p => (p.$state === 'disabled' ? '#d5d8da' : p.$select ? '#33435e' : '#999')};
  font-size: 10.6px;
  svg { color: #33435e; }
`;
const Options = styled.div`
  position: absolute;
  left: 0;
  top: 53.500px;
  width: 150px;
  height: 93px;
  z-index: 3;
  background: #fff;
  border: 1px solid #5b8bd6;
  color: #33435e;
`;
const Option = styled.div<{ $on?: boolean }>`
  height: 13px;
  padding-left: 12.500px;
  line-height: 13px;
  background: ${p => (p.$on ? '#1e90ff' : 'none')};
  color: ${p => (p.$on ? '#fff' : '#33435e')};
`;
const ModalFoot = styled.div`
  display: flex;
  align-items: flex-start;
  justify-content: space-between;
  padding: 13px 12px 0 20.500px;
  color: #1d6fa5;
  line-height: 26px;
`;
const DisabledButton = styled.span`
  width: 71px;
  height: 33px;
  border: 1px solid #e0e0e0;
  border-radius: 3px;
  background: #f0f0f0;
  color: #b9bfc6;
  line-height: 32px;
  text-align: center;
`;

type FieldProps = { label?: string; text?: string; select?: boolean; disabled?: boolean; span?: boolean; options?: string[] };
const Field = ({ label, text, select, disabled, span, options }: FieldProps) => (
  <FieldBox $span={span}>
    <Label $c={disabled ? '#2a3342' : '#e8281e'}>{label}</Label>
    <Control $state={disabled ? 'disabled' : options ? 'open' : 'invalid'} $select={select} $filled={select && !!text}>
      <span>{text}</span>{select && <Caret />}
    </Control>
    {options && <Options>{options.map((o, i) => <Option key={o} $on={i === 0}>{o}</Option>)}</Options>}
  </FieldBox>
);

const StockPanel = () => (
  <Body $h={702}>
    <Sidebar>
      <MenuButton><FaAlignJustify size={15} /></MenuButton>
      {['truck', 'cart', 'file', 'box', 'dollar', 'cloud', 'cogs', 'chart'].map(k => (
        <SideItem key={k} $h={k === 'dollar' ? 49 : 32.8}>{sideIcons[k]}</SideItem>
      ))}
    </Sidebar>
    <Main>
      <AppHeader brandW={512} bannerW={529} name="Rafaela Bedim Chiare" nameW={99} />
      <PageTitle>SEARCH STOCK</PageTitle>
      <StockTabs><StockTab>EMBRAER STOCK</StockTab><StockTabRest /></StockTabs>
      <StockActions>
        <Button $kind="outline" $w={55} $h={24}><FaSlidersH size={8} />Filters</Button>
        <NewPartsButton $kind="primary" $w={76} $h={24}><FaPlus size={8} />New Parts</NewPartsButton>
        <Button $kind="outline" $w={87} $h={24}><FaDownload size={9} />Export Stock</Button>
        <PageSize><PageSizeSelect $w={56} $h={24}>10 <Caret /></PageSizeSelect>407928 items</PageSize>
      </StockActions>
      <FilterPanel>
        <FilterHead><FaSlidersH size={8} />Create individual or combined filters:</FilterHead>
        <FilterGrid>
          <FilterField $up><Label $s={8.6}>Sales Organization</Label><SelectInput $h={28} $mt={3}>All <Caret /></SelectInput></FilterField>
          <FilterField><Label $s={9.2}>Plant:</Label><Input $h={28} $mt={3} /></FilterField>
          <FilterField><Label /><Input $h={28} $mt={3} /></FilterField>
          <FilterField><Label /><Input $h={28} $mt={3} /></FilterField>
          <FilterField><Label /><SelectInput $h={28} $mt={3}><span /><Caret small /></SelectInput></FilterField>
          <FilterField><Label $s={9.2}>Serial Number:</Label><Input $h={28} $mt={3} /></FilterField>
          <FilterField><Label $s={9.3}>Distribution Channel</Label><SelectInput $h={28} $mt={3}><span /><Caret /></SelectInput></FilterField>
          <FilterField><Label $s={9.3}>Notification</Label><Input $h={28} $mt={3} /></FilterField>
          <FilterField><Label /><Input $h={28} $mt={3} /></FilterField>
          <FilterField><Label /><Input $h={28} $mt={3} /></FilterField>
          <FilterField><Label /><Input $h={28} $mt={3} /></FilterField>
        </FilterGrid>
        <FilterStatus>
          <Label $mt={13} $s={9.3}>Status</Label>
          <CheckGroup mt={8.500} items={[['All', 49], ['SAP Stock', 82.5], ['At the DOCK BK', 107], ['', 703], ['Removed', 80]]} />
        </FilterStatus>
        <FilterFoot />
      </FilterPanel>
      <FilterPanel $mt={12}>
        <StockHead>
          <span>CONSUME</span><span>MATERIAL</span><span>PART NUMBER</span>
          <StockUom>UOM</StockUom><span>QTY</span><span>TYPE</span>
        </StockHead>
        <StockLine h={84} top ecode="-" pn="7510114-855" qty="1" kind="Core Process BK" book />
        <StockLine h={67} ecode="4562" pn="CCR244CS-3-03" plant="BJG1" type="S10" num="8008608306" site="BJG1" uom="UM" qty="545" kind="SAP Stock" />
        <StockLine h={67} alt ecode="4562" pn="CCR244CS-3-03" plant="BJG1" type="S10" num="C013966570" site="BJG1" uom="UM" qty="50" kind="SAP Stock" />
      </FilterPanel>
    </Main>
    <Overlay />
  </Body>
);

const ReceivingModal = () => (
  <Modal>
    <ModalHead>
      <span>RECEIVING AT THE DOCK</span>
      <svg width="12" height="12" viewBox="0 0 12 12" stroke="#1f78b6" strokeWidth="2"><path d="M1.500 1l9 10M10.500 1l-9 10" /></svg>
    </ModalHead>
    <ModalInfo><Round><FaExchangeAlt size={10} /></Round><div>Dock Received Date<br />Dec 17, 2019</div></ModalInfo>
    <ModalBody>
      <ModalTitle>Part Number Details</ModalTitle>
      <ModalCard>
        <Label>Select Part Number Type</Label>
        <Radios>
          <RadioItem $w={95}><Radio $on />Pn At the Dock</RadioItem>
          <RadioItem $w={95}><Radio />Core At the Dock</RadioItem>
        </Radios>
        <FormGrid>
          <Field label="Plant *" text="Select Plant" select options={['Select Plant', 'FLL1', 'FLL2', 'FLL3', 'US01', 'US02', 'US03']} />
          <Field label="Distribution Channel" select />
          <Field label="Cart *" text="Cart..." span />
          <Field disabled />
          <Field label="Ecode *" text="Ecode..." disabled />
          <Field label="Description *" text="Description..." disabled />
          <Field label="Hazard Indicator *" text="Hazard Indicator..." disabled />
          <Field label="Quantity *" text="Quantity..." />
          <Field label="UOM *" select />
          <Field label="Carrier *" select />
          <Field label="AWB *" text="AWB..." />
          <Field label="Supplier Invoice *" text="Supplier Invoice..." />
          <Field label="Reference *" text="Select" select />
        </FormGrid>
      </ModalCard>
    </ModalBody>
    <ModalFoot>Cancel<DisabledButton>Save</DisabledButton></ModalFoot>
  </Modal>
);

const leftTabs: TabInfo[] = [
  { icon: 'outlook', title: 'Email – Sahara' }, { icon: 'slack', title: 'Slack | * Yuri F' }, { icon: 'jira', title: '[EPT-3934] Blackout' },
  { icon: 'heroku', title: 'parts-request-api' }, { icon: 'heroku', title: 'sahara | Heroku' }, { icon: 'mlab', title: 'mLab: Cloud-hosted' },
  { icon: 'pt', title: 'parts-request-ui' }, { icon: 'mlab', title: 'mLab: Cloud-hosted' }, { icon: 'bird', title: 'Embraer - eParts' },
];
const rightTabs: TabInfo[] = [
  { icon: 'jira', title: 'eParts - All Items (eParts+)' }, { icon: 'jira', title: '[EPT-3996] Blackout: Export' },
  { icon: 'jira', title: '[EPT-4050] Blackout: Mudar' }, { icon: 'bird', title: 'Embraer - eParts' }, { icon: 'bird', title: 'Embraer - eParts' },
];

export default function App() {
  return (
    <>
      <Global />
      <Desktop>
        <Window>
          <Chrome tabs={leftTabs} w={130} bg="#f3f3f3" newBg="#cdcdcd" path="/#/admin/profile/job-functions" />
          <JobFunctions />
          <TaskbarView />
          <Highlight $x={76} $y={425} $w={277} $h={44} />
          <Highlight $x={1038} $y={252} $w={224} $h={54} />
        </Window>
        <Window>
          <Chrome tabs={rightTabs} w={193} bg="#cbcbcb" newBg="#d0d0d0" path="/#/stock-panel" />
          <StockPanel />
          <ReceivingModal />
          <Highlight $x={341} $y={308} $w={140} $h={155} />
        </Window>
      </Desktop>
    </>
  );
}
